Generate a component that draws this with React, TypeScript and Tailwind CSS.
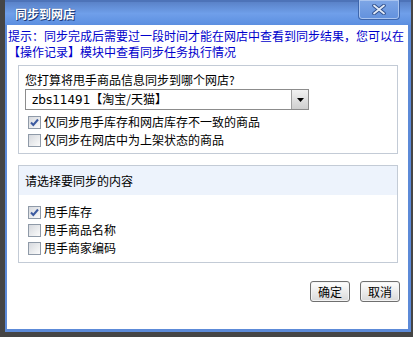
import React from "react";

const font = { fontFamily: '"Noto Sans CJK SC", "Liberation Sans", sans-serif' };

function Check({ checked }: { checked?: boolean }) {
  return (
    <span className="relative inline-block w-[13px] h-[13px] shrink-0 border border-[#8f9aa8] bg-gradient-to-br from-[#d6d9de] to-[#fbfbfb]">
      {checked && (
        <svg className="absolute left-0 top-0" width="11" height="11" viewBox="0 0 11 11">
          <path d="M2 5.5 L4.3 8 L9 2.5" fill="none" stroke="#3c5aa0" strokeWidth="2" />
        </svg>
      )}
    </span>
  );
}

function Row({ checked, label }: { checked?: boolean; label: string }) {
  return (
    <div className="flex items-center h-[18px] pl-[3px] gap-[3px] text-[12px] text-black leading-[18px]">
      <Check checked={checked} />
      <span>{label}</span>
    </div>
  );
}

function Btn({ label }: { label: string }) {
  return (
    <button className="w-[40px] h-[21px] rounded-[3px] border border-[#6f6f6f] bg-gradient-to-b from-[#ffffff] to-[#d9d9d9] text-[12px] leading-[19px] text-black shadow-[inset_0_0_0_1px_#f4f4f4]">
      {label}
    </button>
  );
}

export default function App() {
  return (
    <div className="w-[413px] h-[337px] bg-[#454545] overflow-hidden" style={font}>
      <div className="ml-[5px] w-[406px] h-[332px] flex flex-col">
        <div className="relative h-[25px] shrink-0 bg-gradient-to-b from-[#5a82c8] via-[#6f9fea] to-[#5c8fe0] border-t-2 border-[#4d73b8]">
          <span
            className="absolute left-[10px] top-[4px] text-[12px] font-bold text-white leading-[16px]"
            style={{ textShadow: "0 0 1px #1c3a78, 1px 1px 0 #1c3a78" }}
          >
            同步到网店
          </span>
          <div className="absolute left-[353px] top-[-2px] w-[42px] h-[20px] rounded-b-[4px] border border-t-0 border-[#3d66ad] bg-gradient-to-b from-[#7ea6e6] to-[#6291dd] shadow-[inset_0_0_0_1px_#a9c4ef] flex items-center justify-center">
            <svg width="14" height="11" viewBox="0 0 14 11">
              <path d="M2 1.5 L12 9.5 M12 1.5 L2 9.5" stroke="#2f4f8c" strokeWidth="3.6" strokeLinecap="round" />
              <path d="M2 1.5 L12 9.5 M12 1.5 L2 9.5" stroke="#e3ebf7" strokeWidth="1.8" strokeLinecap="round" />
            </svg>
          </div>
        </div>
        <div className="flex-1 bg-white border-l-2 border-r-[3px] border-b-[3px] border-[#5c8ad8] pt-[3px] flex flex-col">
          <div className="pl-[1px] text-[12px] leading-[16px] text-[#0000cc] whitespace-nowrap">
            <div>提示：同步完成后需要过一段时间才能在网店中查看到同步结果，您可以在</div>
            <div>【操作记录】模块中查看同步任务执行情况</div>
          </div>
          <div className="ml-[11px] mt-[5px] w-[380px] border border-[#c3cbd6] pt-[6px] pl-[6px] pb-[4px]">
            <div className="text-[12px] leading-[16px] text-black">您打算将甩手商品信息同步到哪个网店?</div>
            <div className="mt-[1px] w-[284px] h-[21px] border border-[#8c8c8c] flex items-center">
              <span className="flex-1 pl-[6px] text-[12px] leading-[19px] text-black" style={{ fontFamily: '"DejaVu Sans", "Noto Sans CJK SC", sans-serif' }}>
                zbs11491<span style={font}>【淘宝/天猫】</span>
              </span>
              <span className="w-[17px] h-[19px] border-l border-[#a0a0a0] bg-gradient-to-b from-[#f2f2f2] to-[#cfcfcf] flex items-center justify-center">
                <svg width="7" height="4" viewBox="0 0 7 4">
                  <path d="M0 0 H7 L3.5 4 Z" fill="#000" />
                </svg>
              </span>
            </div>
            <div className="mt-[3px]">
              <Row checked label="仅同步甩手库存和网店库存不一致的商品" />
              <Row label="仅同步在网店中为上架状态的商品" />
            </div>
          </div>
          <div className="ml-[11px] mt-[11px] w-[380px] border border-[#c3cbd6] pb-[5px]">
            <div className="h-[29px] bg-[#edf3fc] pl-[6px] text-[12px] leading-[29px] text-black">请选择要同步的内容</div>
            <div className="mt-[8px] pl-[6px]">
              <Row checked label="甩手库存" />
              <Row label="甩手商品名称" />
              <Row label="甩手商家编码" />
            </div>
          </div>
          <div className="mt-[18px] pr-[8px] flex justify-end gap-[10px]">
            <Btn label="确定" />
            <Btn label="取消" />
          </div>
        </div>
      </div>
    </div>
  );
}
